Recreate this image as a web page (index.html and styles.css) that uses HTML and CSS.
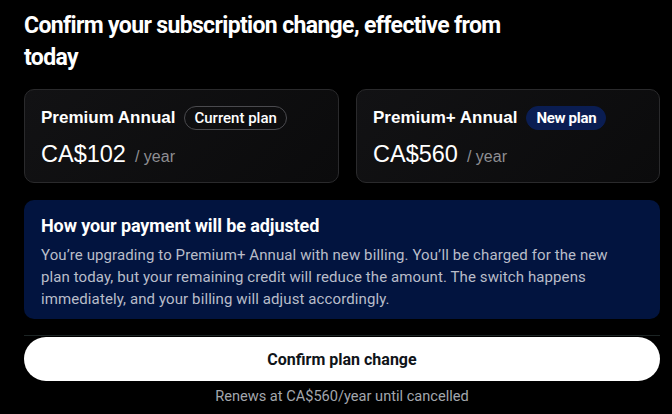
FILE: index.html
```html
<!DOCTYPE html>
<html lang="en">
<head>
  <meta charset="UTF-8">
  <meta name="viewport" content="width=device-width, initial-scale=1.0">
  <title>Confirm subscription change</title>
  <link rel="stylesheet" href="styles.css">
</head>
<body>
  <div class="page">
    <!-- Heading -->
    <h1 class="title">Confirm your subscription change, effective from today</h1>

    <!-- Plan comparison -->
    <div class="plans">
      <div class="plan-card plan-current">
        <div class="plan-head">
          <span class="plan-name">Premium Annual</span>
          <span class="badge badge-outline">Current plan</span>
        </div>
        <div class="plan-price">
          <span class="amount">CA$102</span>
          <span class="period">/ year</span>
        </div>
      </div>
      <div class="plan-card plan-new">
        <div class="plan-head">
          <span class="plan-name">Premium+ Annual</span>
          <span class="badge badge-filled">New plan</span>
        </div>
        <div class="plan-price">
          <span class="amount">CA$560</span>
          <span class="period">/ year</span>
        </div>
      </div>
    </div>

    <!-- Explanation -->
    <div class="notice">
      <h3>How your payment will be adjusted</h3>
      <p>You’re upgrading to Premium+ Annual with new billing. You’ll be charged for the new plan today, but your remaining credit will reduce the amount. The switch happens immediately, and your billing will adjust accordingly.</p>
    </div>

    <!-- Footer -->
    <div class="footer">
      <button class="confirm-btn">Confirm plan change</button>
      <div class="renews">Renews at CA$560/year until cancelled</div>
    </div>
  </div>
</body>
</html>
```

FILE: styles.css
```css
* {
  box-sizing: border-box;
  margin: 0;
  padding: 0;
}

body {
  background: #000;
  color: #fff;
  font-family: Roboto, "Liberation Sans", sans-serif;
}

.page {
  width: 672px;
  padding: 10px 12px 0 24px;
  display: flex;
  flex-direction: column;
}

.title {
  max-width: 520px;
  font-size: 23px;
  font-weight: 700;
  line-height: 32px;
  letter-spacing: -0.65px;
  color: #fff;
}

.plans {
  margin-top: 15px;
  display: grid;
  grid-template-columns: 315fr 304fr;
  gap: 17px;
}

.plan-card {
  height: 94px;
  border: 1px solid #2a2a2c;
  border-radius: 10px;
  background: linear-gradient(135deg, #121214 0%, #0b0b0c 100%);
  padding: 16px 16px 14px;
  display: flex;
  flex-direction: column;
  gap: 10px;
}

.plan-head {
  display: flex;
  align-items: center;
  gap: 9px;
  height: 24px;
}

.plan-name {
  font-family: "Liberation Sans", Arial, sans-serif;
  font-size: 17px;
  font-weight: 700;
  color: #fff;
}

.badge {
  height: 24px;
  line-height: 22px;
  padding: 0 9px;
  border-radius: 12px;
  font-size: 15px;
  font-weight: 500;
  color: #fff;
}

.badge-outline {
  border: 1px solid #4a4a4e;
}

.badge-filled {
  background: #0a1d52;
  border: 1px solid #0a1d52;
  font-weight: 700;
  letter-spacing: -0.3px;
}

.plan-price {
  display: flex;
  align-items: baseline;
  gap: 9px;
  height: 28px;
  line-height: 28px;
  font-family: "Liberation Sans", Arial, sans-serif;
}

.amount {
  font-size: 23.5px;
  color: #fff;
}

.period {
  font-size: 16px;
  color: #8e8e93;
}

.notice {
  margin-top: 17px;
  height: 119px;
  background: #02143f;
  border-radius: 10px;
  padding: 16px 24px 9px 17px;
}

.notice h3 {
  font-size: 18px;
  font-weight: 700;
  line-height: 20px;
  letter-spacing: -0.1px;
  color: #fff;
  margin-bottom: 8px;
}

.notice p {
  font-size: 15px;
  line-height: 22px;
  letter-spacing: 0.1px;
  color: #b9bdc9;
}

.footer {
  margin-top: 16px;
  border-top: 1px solid #1c2424;
  padding-top: 1px;
  display: flex;
  flex-direction: column;
  align-items: stretch;
}

.confirm-btn {
  height: 44px;
  border: none;
  border-radius: 22px;
  background: #fff;
  color: #0f1419;
  font-family: Roboto, "Liberation Sans", sans-serif;
  font-size: 16px;
  font-weight: 700;
}

.renews {
  margin-top: 5px;
  text-align: center;
  font-size: 14.6px;
  line-height: 20px;
  color: #a3a7ad;
}
```
